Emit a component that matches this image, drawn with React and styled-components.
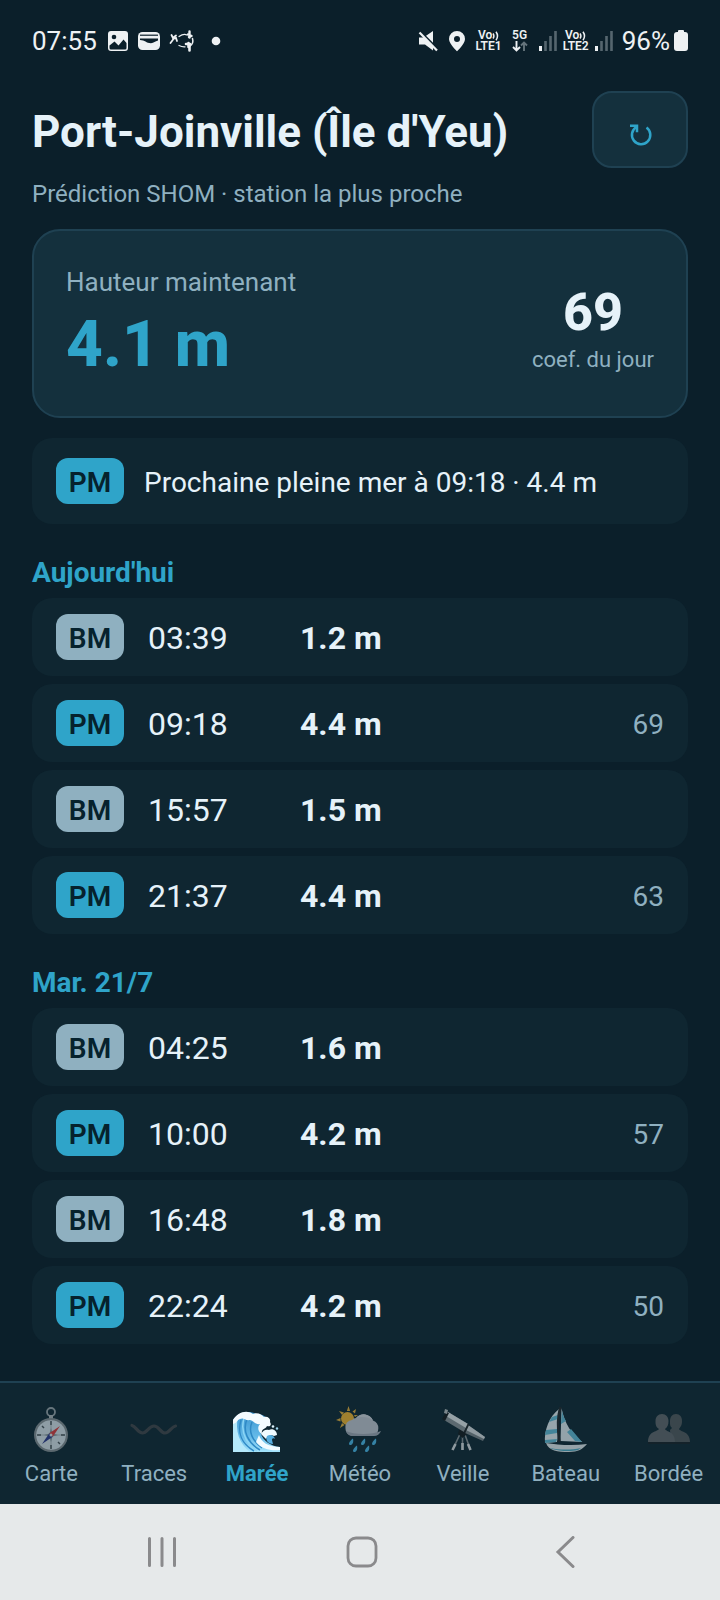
import React from 'react'
import styled, { createGlobalStyle } from 'styled-components'

const colors = {
  bg: '#0b1f2a',
  row: '#0f2631',
  card: '#14303d',
  border: '#1f4152',
  accent: '#2fa4c9',
  text: '#e6f2f9',
  muted: '#8fb0c0',
}

const GlobalStyle = createGlobalStyle`
  * {
    box-sizing: border-box;
  }
  body {
    margin: 0;
    background: ${colors.bg};
    color: ${colors.text};
    font-family: Roboto, sans-serif;
  }
`

const Screen = styled.div`
  display: flex;
  flex-direction: column;
  height: 100vh;
`

const StatusBar = styled.div`
  display: flex;
  justify-content: space-between;
  align-items: center;
  height: 82px;
  padding: 0 32px;
  flex-shrink: 0;
  color: #eef1f3;
  font-size: 26px;
  line-height: 30px;
`

const StatusGroup = styled.div`
  display: flex;
  align-items: center;
  gap: ${p => p.$gap}px;
`

const Stack = styled.div`
  display: flex;
  flex-direction: column;
  align-items: center;
  font-size: 12px;
  line-height: 11px;
  font-weight: 600;
`

const Content = styled.main`
  flex: 1;
  min-height: 0;
  overflow: hidden;
  padding: 9px 32px 0;
`

const Header = styled.header`
  display: flex;
  justify-content: space-between;
  align-items: center;
`

const Title = styled.h1`
  margin: 4px 0 0;
  font-size: 44px;
  line-height: 52px;
  font-weight: 700;
`

const RefreshButton = styled.button`
  display: flex;
  align-items: center;
  justify-content: center;
  width: 96px;
  height: 77px;
  padding: 8px 0 0;
  border: 2px solid ${colors.border};
  border-radius: 20px;
  background: ${colors.card};
  color: ${colors.accent};
`

const Subtitle = styled.p`
  margin: 12px 0 0;
  color: ${colors.muted};
  font-size: 24px;
  line-height: 28px;
`

const Card = styled.section`
  display: flex;
  justify-content: space-between;
  align-items: center;
  height: 189px;
  margin-top: 21px;
  padding: 0 32px;
  border: 2px solid ${colors.border};
  border-radius: 28px;
  background: ${colors.card};
`

const Label = styled.div`
  color: ${colors.muted};
  font-size: ${p => p.$size}px;
  line-height: 30px;
`

const Height = styled.div`
  margin-top: 12px;
  color: ${colors.accent};
  font-size: 64px;
  line-height: 72px;
  font-weight: 800;
`

const Coef = styled.div`
  padding-top: 8px;
  text-align: center;
`

const CoefValue = styled.div`
  font-size: 52px;
  line-height: 64px;
  font-weight: 800;
`

const NextTide = styled.section`
  display: flex;
  align-items: center;
  gap: 20px;
  height: 86px;
  margin-top: 20px;
  padding: 0 24px;
  border-radius: 20px;
  background: ${colors.row};
`

const NextText = styled.span`
  padding-top: 4px;
  font-size: 28px;
  line-height: 32px;
`

const Badge = styled.span`
  display: inline-flex;
  align-items: center;
  justify-content: center;
  width: 68px;
  height: 46px;
  padding-top: 3px;
  border-radius: 12px;
  background: ${p => (p.$kind === 'PM' ? colors.accent : colors.muted)};
  color: #06222d;
  font-size: 28px;
  line-height: 32px;
  font-weight: 600;
`

const Day = styled.h2`
  margin: 32px 0 8px;
  color: ${colors.accent};
  font-size: 28px;
  line-height: 34px;
  font-weight: 700;
`

const Rows = styled.ul`
  display: flex;
  flex-direction: column;
  gap: 8px;
  margin: 0;
  padding: 0;
  list-style: none;
`

const Row = styled.li`
  display: grid;
  grid-template-columns: 68px 128px 1fr auto;
  column-gap: 24px;
  align-items: center;
  height: 78px;
  padding: 0 24px;
  border-radius: 20px;
  background: ${colors.row};
`

const RowValue = styled.span`
  padding-top: 2px;
  font-size: 32px;
  line-height: 40px;
  font-weight: ${p => (p.$strong ? 700 : 400)};
`

const RowCoef = styled.span`
  padding-top: 3px;
  color: ${colors.muted};
  font-size: 28px;
  line-height: 40px;
`

const TabBar = styled.nav`
  display: flex;
  flex-shrink: 0;
  height: 123px;
  border-top: 2px solid ${colors.border};
  background: ${colors.row};
`

const Tab = styled.a`
  display: flex;
  flex: 1;
  min-width: 0;
  flex-direction: column;
  align-items: center;
  padding-top: 23px;
  gap: 7px;
  color: ${p => (p.$active ? colors.accent : colors.muted)};
  font-size: 22px;
  line-height: 26px;
  font-weight: ${p => (p.$active ? 700 : 400)};
  text-decoration: none;

  svg {
    opacity: ${p => (p.$active ? 1 : 0.6)};
  }
`

const SystemBar = styled.div`
  display: grid;
  grid-template-columns: repeat(3, 1fr);
  justify-items: center;
  align-items: center;
  flex-shrink: 0;
  height: 96px;
  padding: 0 56px 0 60px;
  background: #e6e9ea;
`

const SystemButton = styled.button`
  display: flex;
  justify-content: center;
  width: 52px;
  padding: 0;
  border: 0;
  background: none;
  color: #8a8a8c;
`

const ImageIcon = () => (
  <svg width="22" height="22" viewBox="0 0 22 22">
    <rect x="1" y="1" width="20" height="20" rx="3" fill="currentColor" />
    <circle cx="7" cy="7" r="2.3" fill={colors.bg} />
    <path d="M2.500 15.500 7.500 11.500l4 4 5-6 3 3.500V18a1.500 1.500 0 0 1-1.500 1.500H4A1.500 1.500 0 0 1 2.500 18z" fill={colors.bg} />
  </svg>
)

const MailIcon = () => (
  <svg width="24" height="22" viewBox="0 0 24 22">
    <rect x="1" y="2" width="22" height="18" rx="4.5" fill="currentColor" />
    <path d="M3 5.200h18" stroke={colors.bg} strokeWidth="1.200" />
    <path d="M3 8.500h18v2c-3 .5-4 2.700-7 2.700-5 0-6-3.200-11-3.200z" fill={colors.bg} />
  </svg>
)

const SwimIcon = () => (
  <svg width="26" height="22" viewBox="0 0 26 22" fill="none" stroke="currentColor" strokeLinecap="round">
    <path d="M1.500 13l3-4-2-4M4 9l3-1 1 3M5 7l2-1.500" strokeWidth="1.800" />
    <path d="M10 6.500c3-2 6-2.500 8-1.500" strokeWidth="1.300" />
    <path d="M19 4.500l2.500 1M20.500 1.500v6M20 7l2.500-1" strokeWidth="2.400" />
    <path d="M23.500 8.500c.8 3 0 6-2.500 7.500" strokeWidth="1.500" />
    <path d="M17 14h4M19.500 13v4M20.500 16v4.500" strokeWidth="2.600" />
    <path d="M10 15.500c2 1 4 1.500 6 1.300" strokeWidth="1.300" />
  </svg>
)

const DotIcon = () => (
  <svg width="10" height="10" viewBox="0 0 10 10">
    <circle cx="5" cy="5" r="4.300" fill="currentColor" />
  </svg>
)

const MuteIcon = () => (
  <svg width="20" height="22" viewBox="0 0 20 22" fill="currentColor">
    <path d="M1 7.500h4.500L15 1v19.500l-8-6H1z" />
    <path d="M0-.500 20 19.500" stroke={colors.bg} strokeWidth="2.500" />
    <path d="M1.500 2.500 19 20.500" stroke="currentColor" strokeWidth="2.200" />
  </svg>
)

const PinIcon = () => (
  <svg width="18" height="22" viewBox="0 0 18 22" fill="currentColor" fillRule="evenodd">
    <path d="M9 1a8 8 0 0 0-8 8c0 5 8 12.200 8 12.200S17 14 17 9a8 8 0 0 0-8-8zm0 5a3 3 0 1 1 0 6 3 3 0 0 1 0-6z" />
  </svg>
)

const VoiceWaves = () => (
  <svg width="7" height="10" viewBox="0 0 7 10" fill="none" stroke="currentColor" strokeWidth="1.500">
    <path d="M1 2.500q1.800 2.500 0 5M4 .800q3 4.200 0 8.400" />
  </svg>
)

const ArrowsIcon = () => (
  <svg width="16" height="11" viewBox="0 0 16 11" fill="none" strokeWidth="1.900">
    <path d="M4.500 0v9.500M1 6 4.500 9.500 8 6" stroke="currentColor" />
    <path d="M12 10V1M9 4.500 12 1.500 15 4.500" stroke="#65747c" />
  </svg>
)

const SignalIcon = () => (
  <svg width="20" height="20" viewBox="0 0 20 20">
    <path d="M2.500 15v5" stroke="currentColor" strokeWidth="3" />
    <path d="M7.500 10v10M12.500 5v15M17.500 0v20" stroke="#56666f" strokeWidth="2.600" />
  </svg>
)

const BatteryIcon = () => (
  <svg width="14" height="22" viewBox="0 0 14 22" fill="currentColor">
    <rect x="4" y="0" width="6" height="4" rx="1" />
    <rect x="0" y="2" width="14" height="19" rx="3" />
  </svg>
)

const RefreshIcon = () => (
  <svg width="24" height="24" viewBox="0 0 24 24" fill="none" stroke="currentColor" strokeWidth="2.500">
    <path d="M18.500 5.500A9.200 9.200 0 1 1 8.500 5" />
    <path d="M2 3.700h7v6.500" />
  </svg>
)

const CompassIcon = () => (
  <svg width="48" height="48" viewBox="0 0 48 48">
    <circle cx="24" cy="6" r="4" fill="none" stroke="#a2abb0" strokeWidth="1.800" />
    <path d="M22 9h4v4h-4z" fill="#b5babd" />
    <circle cx="24" cy="29" r="17" fill="#8e9599" />
    <circle cx="24" cy="29" r="14.800" fill="#e3edf3" />
    <path d="M24 16v26M11 29h26" stroke="#b4bcc1" strokeWidth="1" />
    <path d="M24 15v4M24 39v4M10 29h4M34 29h4M15 20l2 2M33 38l-2-2" stroke="#4d565b" strokeWidth="1.500" />
    <path d="m24 22 1.500 5.500L31 29l-5.500 1.500L24 36l-1.500-5.500L17 29l5.500-1.500z" fill="#8f9a9f" />
    <path d="M33 20 22.300 27.300l3.400 3.400z" fill="#e63b3b" />
    <path d="M15 38 22.300 27.300l3.400 3.400z" fill="#2f3a90" />
    <circle cx="24" cy="29" r="1.500" fill="#eee" />
  </svg>
)

const WavyIcon = () => (
  <svg width="48" height="48" viewBox="0 0 48 48" fill="none">
    <path
      d="M2 19.500c4 1 6 7.500 10.500 7.500s6.500-7 11.500-7 6.500 7 11 7 6.500-6.500 10.500-7"
      stroke="#45474a"
      strokeWidth="3.200"
      strokeLinecap="round"
    />
  </svg>
)

const WaveIcon = () => (
  <svg width="48" height="48" viewBox="0 0 48 48">
    <defs>
      <linearGradient id="sea" x1="0" y1="0" x2="0" y2="1">
        <stop offset="0" stopColor="#3b94cf" />
        <stop offset="0.600" stopColor="#63b9e8" />
        <stop offset="1" stopColor="#a4e3fb" />
      </linearGradient>
    </defs>
    <path d="M0 46V14C5 6 16 4 23 8c7 0 12 3 12 9-6 0-8 4-7 11 2 6 9 12 19 13v5z" fill="url(#sea)" />
    <path d="M0 46V14l5-3c-3 13 1 27 12 35z" fill="#b5e9fb" />
    <path d="M8 14c-4 13 1 24 13 31M14 13c-5 12 1 24 13 31M19 16c-4 10 1 19 10 26" fill="none" stroke="#2f8ac6" strokeWidth="1.500" />
    <path d="M11 12c-4 14 1 24 13 33" fill="none" stroke="#8cd6f5" strokeWidth="1.500" />
    <path
      d="M0 14C4 7 13 3 20 8c5-2 9 1 11 3 4-1 7 2 6 5 2 3 0 5-3 4-2 4-6 2-5 8-4-2-5-7-2-10-5 1-7-4-10-4-5 1-6-3-10-1-3 1-3 4-7 5z"
      fill="#f4fbff"
    />
    <path d="M28 28c2-4 5-5 8-4 4-2 8 1 8 5l-3 1c-3-2-6 0-8 3z" fill="#f0faff" />
    <path d="M34 30c3-2 7-1 8 3-1-1-3-1-3 1l1 4c-5 0-8-4-6-8z" fill="#57aee0" />
    <path d="M26 29c2 7 9 12 21 12v3c-9 1-19-1-24-8z" fill="#f2fbff" />
    <circle cx="40" cy="20.500" r="1.300" fill="#dff4fd" />
    <circle cx="44" cy="22.500" r="1.200" fill="#9fd6ef" />
  </svg>
)

const WeatherIcon = () => (
  <svg width="48" height="48" viewBox="0 0 48 48">
    <path
      d="M12.500 0l1.600 5h-3.200zM20 3l-1 4.500-2.500-2zM3 5l5 1.500L6 9zM0 14l4.500-2v3.500zM4 22l2-5 2.500 2zM22 9l-3 2-1-2z"
      fill="#f0b63a"
    />
    <circle cx="11.500" cy="12.500" r="6.500" fill="#ffbd2e" />
    <path d="M16 30a7.500 7.500 0 0 1-6.500-8A7 7 0 0 1 16 14a6 6 0 0 1 4-2 10 10 0 0 1 17 2.500A8.300 8.300 0 0 1 37 30z" fill="#ccced8" />
    <path d="M10 25c8 4 26 4 35 0a8 8 0 0 1-8 5H16a7 7 0 0 1-6-5z" fill="#a8aeba" />
    <path d="M20 12a10 10 0 0 1 17 2.500c-5-4-12-4-17-2.500z" fill="#dcdde4" />
    <path
      d="M17 32.500c-4 3-5 6-3 6.500s4-2 3-6.500zM29 32.500c-4 3-5 6-3 6.500s4-2 3-6.500zM40 32.500c-4 3-5 6-3 6.500s4-2 3-6.500zM21 39.500c-4 3-5 6-3 6.500s4-2 3-6.500zM33 39.500c-4 3-5 6-3 6.500s4-2 3-6.500z"
      fill="#4fc0f2"
    />
  </svg>
)

const TelescopeIcon = () => (
  <svg width="48" height="48" viewBox="0 0 48 48">
    <path d="M22 26 13.500 44M23.500 26v18M25 26l6.500 18" stroke="#8f969a" strokeWidth="1.600" />
    <path d="M16.500 38l-3 6M23.500 37v7M29 38l2.500 6" stroke="#e3e6e8" strokeWidth="2.600" />
    <path d="M20 24h7l1 4-4.500 4L19 28z" fill="#15191c" />
    <path d="m9 6 20 12-4 8L5 14z" fill="#8f979b" />
    <path d="m9 6 20 12-2 4L7 10z" fill="#f0f3f4" />
    <path d="m7 6 3 1-4 8-3-2z" fill="#14181a" />
    <path d="m5 7 1-4 3 1-1 4z" fill="#c2c6c8" />
    <path d="m29 19 17 12-2 4-18-8z" fill="#80888c" />
    <path d="m29 19 17 12-1 2-18-9z" fill="#e4e8ea" />
    <path d="m29.500 18-4 8.500" stroke="#22272a" strokeWidth="1.800" />
  </svg>
)

const SailboatIcon = () => (
  <svg width="48" height="48" viewBox="0 0 48 48">
    <path d="M17 3C7 11 2 24 3 37l12-1c2-11-1-21 2-33z" fill="#f2fafd" />
    <path d="M10 11l6-2v4l-9 3zM4 24l11-1v4L3 29zM3 34l12-1-1 3-11 1z" fill="#66c3de" />
    <path d="M19.500 2c3 15 10 27 21 34l-22-1z" fill="#ecf7fb" />
    <path d="M20 5c1 4 2 7 4 10l-5 3zM29 23l11 13-7-1-8-9z" fill="#66c3de" />
    <path d="M18.500 1c-4 12-3 23-1 35" fill="none" stroke="#24282b" strokeWidth="2.400" />
    <path d="M4 37c12 2 27 3 41 1-4 5-9 8-18 8-12 0-20-1-23-9z" fill="#eff5f7" />
    <path d="M8 42c10 2 21 2 31 0l-3 2c-8 2-19 1-26-1z" fill="#4fb0ca" />
  </svg>
)

const PeopleIcon = () => (
  <svg width="48" height="48" viewBox="0 0 48 48">
    <path d="M31 8c4 0 6 3 6 7s-1 5-3 8c1 3 11 2 11 13H26l-1-12 2-2c-2-2-2-3-2-7s2-7 6-7z" fill="#585c5f" />
    <path d="M17 8c4 0 6.500 3 6.500 7s-1 6-3.500 8c1 3 10 2 10 13H3c0-11 9-10 11-13-3-2-3.500-4-3.500-8S13 8 17 8z" fill="#666a6d" />
    <path d="M3 37h42" stroke="#1c2023" strokeWidth="1.500" />
  </svg>
)

const days = [
  {
    name: "Aujourd'hui",
    tides: [
      { kind: 'BM', time: '03:39', height: '1.2 m' },
      { kind: 'PM', time: '09:18', height: '4.4 m', coef: 69 },
      { kind: 'BM', time: '15:57', height: '1.5 m' },
      { kind: 'PM', time: '21:37', height: '4.4 m', coef: 63 },
    ],
  },
  {
    name: 'Mar. 21/7',
    tides: [
      { kind: 'BM', time: '04:25', height: '1.6 m' },
      { kind: 'PM', time: '10:00', height: '4.2 m', coef: 57 },
      { kind: 'BM', time: '16:48', height: '1.8 m' },
      { kind: 'PM', time: '22:24', height: '4.2 m', coef: 50 },
    ],
  },
  { name: 'Mer. 22/7', tides: [] },
]

const tabs = [
  { label: 'Carte', Icon: CompassIcon },
  { label: 'Traces', Icon: WavyIcon },
  { label: 'Marée', Icon: WaveIcon },
  { label: 'Météo', Icon: WeatherIcon },
  { label: 'Veille', Icon: TelescopeIcon },
  { label: 'Bateau', Icon: SailboatIcon },
  { label: 'Bordée', Icon: PeopleIcon },
]

function VoLte({ sim }) {
  return (
    <Stack>
      <StatusGroup $gap={0}>Vo<VoiceWaves /></StatusGroup>
      <span>LTE{sim}</span>
    </Stack>
  )
}

function PhoneStatus() {
  return (
    <StatusBar>
      <StatusGroup $gap={16}>
        <StatusGroup $gap={10}>
          <span>07:55</span>
          <StatusGroup $gap={8}>
            <ImageIcon />
            <MailIcon />
            <SwimIcon />
          </StatusGroup>
        </StatusGroup>
        <DotIcon />
      </StatusGroup>
      <StatusGroup $gap={8}>
        <StatusGroup $gap={5}>
          <StatusGroup $gap={10}>
            <MuteIcon />
            <PinIcon />
            <VoLte sim={1} />
            <Stack>
              <span>5G</span>
              <ArrowsIcon />
            </Stack>
            <SignalIcon />
          </StatusGroup>
          <VoLte sim={2} />
          <SignalIcon />
        </StatusGroup>
        <StatusGroup $gap={4}>
          <span>96%</span>
          <BatteryIcon />
        </StatusGroup>
      </StatusGroup>
    </StatusBar>
  )
}

function TideDay({ name, tides }) {
  return (
    <section>
      <Day>{name}</Day>
      <Rows>
        {tides.map(tide => (
          <Row key={tide.time}>
            <Badge $kind={tide.kind}>{tide.kind}</Badge>
            <RowValue>{tide.time}</RowValue>
            <RowValue $strong>{tide.height}</RowValue>
            {tide.coef && <RowCoef>{tide.coef}</RowCoef>}
          </Row>
        ))}
      </Rows>
    </section>
  )
}

export default function App() {
  return (
    <Screen>
      <GlobalStyle />
      <PhoneStatus />
      <Content>
        <Header>
          <Title>Port-Joinville (Île d'Yeu)</Title>
          <RefreshButton aria-label="Actualiser">
            <RefreshIcon />
          </RefreshButton>
        </Header>
        <Subtitle>Prédiction SHOM · station la plus proche</Subtitle>
        <Card>
          <div>
            <Label $size={26}>Hauteur maintenant</Label>
            <Height>4.1 m</Height>
          </div>
          <Coef>
            <CoefValue>69</CoefValue>
            <Label $size={22}>coef. du jour</Label>
          </Coef>
        </Card>
        <NextTide>
          <Badge $kind="PM">PM</Badge>
          <NextText>Prochaine pleine mer à 09:18 · 4.4 m</NextText>
        </NextTide>
        {days.map(day => (
          <TideDay key={day.name} {...day} />
        ))}
      </Content>
      <TabBar>
        {tabs.map(({ label, Icon }) => (
          <Tab key={label} href="#" $active={label === 'Marée'}>
            <Icon />
            {label}
          </Tab>
        ))}
      </TabBar>
      <SystemBar>
        <SystemButton aria-label="Applications récentes">
          <svg width="32" height="32" viewBox="0 0 32 32" stroke="currentColor" strokeWidth="3" strokeLinecap="round">
            <path d="M4.500 2.500v27M17 2.500v27M29.500 2.500v27" />
          </svg>
        </SystemButton>
        <SystemButton aria-label="Accueil">
          <svg width="32" height="32" viewBox="0 0 32 32" fill="none" stroke="currentColor" strokeWidth="2.800">
            <rect x="2" y="2" width="28" height="28" rx="8" />
          </svg>
        </SystemButton>
        <SystemButton aria-label="Retour">
          <svg width="32" height="32" viewBox="0 0 32 32" fill="none" stroke="currentColor" strokeWidth="3" strokeLinecap="round">
            <path d="M26 1.500 11 16l15 14.500" />
          </svg>
        </SystemButton>
      </SystemBar>
    </Screen>
  )
}
